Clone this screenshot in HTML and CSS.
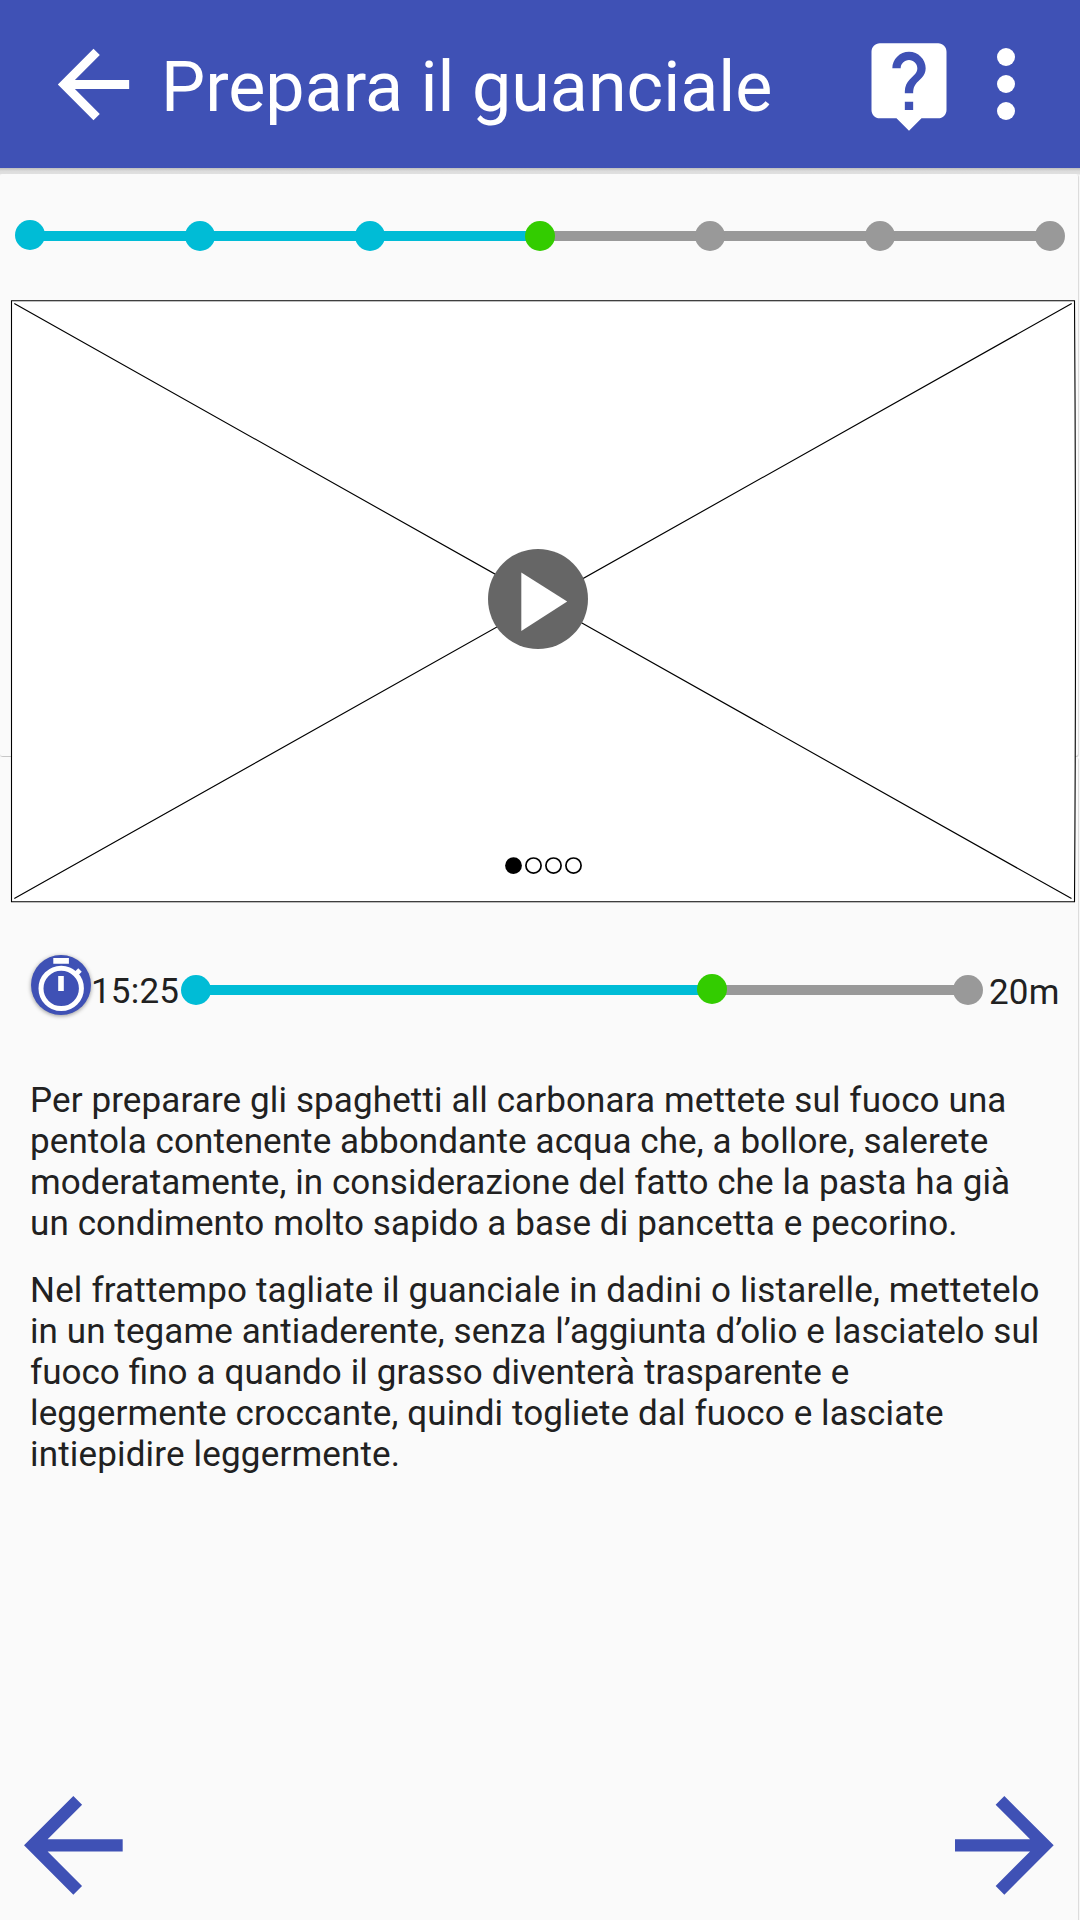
FILE: index.html
```html
<!DOCTYPE html>
<html lang="it">
<head>
<meta charset="utf-8">
<title>Prepara il guanciale</title>
<link rel="stylesheet" href="styles.css">
</head>
<body>
<div class="screen">
  <header class="app-bar">
    <svg class="back" viewBox="0 0 24 24"><path d="M20 11H7.83l5.59-5.59L12 4l-8 8 8 8 1.41-1.41L7.83 13H20v-2z"/></svg>
    <h1 class="title">Prepara il guanciale</h1>
    <svg class="help" viewBox="0 0 24 24"><path d="M19 2H5c-1.11 0-2 .9-2 2v14c0 1.1.89 2 2 2h4l3 3 3-3h4c1.1 0 2-.9 2-2V4c0-1.1-.9-2-2-2zm-6 16h-2v-2h2v2zm2.07-7.75l-.9.92C13.45 11.9 13 12.5 13 14h-2v-.5c0-1.1.45-2.1 1.17-2.83l1.24-1.26c.37-.36.59-.86.59-1.41 0-1.1-.9-2-2-2s-2 .9-2 2H8c0-2.21 1.79-4 4-4s4 1.79 4 4c0 .88-.36 1.68-.93 2.25z"/></svg>
    <svg class="more" viewBox="0 0 24 24"><circle cx="12" cy="6" r="2"/><circle cx="12" cy="12" r="2"/><circle cx="12" cy="18" r="2"/></svg>
  </header>
  <main class="content">
    <div class="sheet sheet-top"></div>
    <div class="sheet sheet-bottom"></div>
    <div class="steps">
      <span class="dot done first"></span><span class="bar done"></span>
      <span class="dot done"></span><span class="bar done"></span>
      <span class="dot done"></span><span class="bar done"></span>
      <span class="dot current"></span><span class="bar"></span>
      <span class="dot"></span><span class="bar"></span>
      <span class="dot"></span><span class="bar"></span>
      <span class="dot"></span>
    </div>
    <svg class="video" viewBox="10 298 1068 606">
      <path class="frame" d="M11.5 300.8Q540 299.2 1074.5 300.8Q1076.5 600 1074.5 901.8Q540 900.2 11.5 901.8Z"/>
      <path class="cross" d="M14.3 303.5Q540 597.6 1071.5 898.6M14.3 898.6L1071.7 303.5"/>
      <circle class="play" cx="538" cy="599" r="50"/>
      <path class="triangle" d="M521.3 572.5L567.2 601.4L521.3 631Z"/>
      <circle cx="513.5" cy="865.6" r="8.4"/>
      <g class="page"><circle cx="533.5" cy="865.6" r="7.6"/><circle cx="553.5" cy="865.6" r="7.6"/><circle cx="573.5" cy="865.6" r="7.6"/></g>
    </svg>
    <div class="timer">
      <div class="clock">
        <svg viewBox="0 0 60 60">
          <path class="solid" d="M22.3 3h15.6v5.8H22.3zM27.2 21h5.6v15h-5.6z"/>
          <circle class="line" cx="30.2" cy="33.4" r="20.2"/>
          <path class="line" d="M44 20L49 15"/>
        </svg>
      </div>
      <span class="time elapsed">15:25</span>
      <div class="track">
        <span class="dot done"></span><span class="bar done elapsed-bar"></span>
        <span class="dot current"></span><span class="bar"></span>
        <span class="dot"></span>
      </div>
      <span class="time total">20m</span>
    </div>
    <div class="text">
      <p><span class="medium">Per preparare gli spaghetti all carbonara mettete sul fuoco una</span><br>pentola contenente abbondante acqua che, a bollore, salerete<br>moderatamente, in considerazione del fatto che la pasta ha già<br><span class="medium">un condimento molto sapido a base di pancetta e pecorino.</span></p>
      <p><span class="wide">Nel frattempo tagliate il guanciale in dadini o listarelle, mettetelo</span><br>in un tegame antiaderente, senza l’aggiunta d’olio e lasciatelo sul<br><span class="narrow">fuoco fino a quando il grasso diventerà trasparente e</span><br><span class="medium">leggermente croccante, quindi togliete dal fuoco e lasciate</span><br><span class="wide">intiepidire leggermente.</span></p>
    </div>
    <nav class="pager">
      <svg viewBox="4 4 16 16"><path d="M20 11H7.83l5.59-5.59L12 4l-8 8 8 8 1.41-1.41L7.83 13H20v-2z"/></svg>
      <svg viewBox="4 4 16 16"><path d="M12 4l-1.41 1.41L16.17 11H4v2h12.17l-5.58 5.59L12 20l8-8z"/></svg>
    </nav>
  </main>
</div>
</body>
</html>
```
FILE: styles.css
```css
* { box-sizing: border-box; }
body { margin: 0; font-family: Roboto, "Liberation Sans", sans-serif; color: #212121; }
svg { display: block; flex: none; }
.screen { width: 1080px; height: 1920px; display: flex; flex-direction: column; overflow: hidden; background: #fafafa; }

.app-bar { height: 168px; flex: none; display: flex; align-items: center; background: #3f51b5; }
.app-bar svg { fill: #fff; }
.back { width: 107px; height: 107px; margin-left: 40px; }
.title { margin: 5px 0 0 14px; width: 698px; font-size: 70px; font-weight: 400; line-height: 84px; color: #fff; white-space: nowrap; }
.help { width: 100px; height: 100px; margin-top: 1px; }
.more { width: 108px; height: 108px; margin-left: -7px; }

.content { flex: 1; position: relative; z-index: 0; display: flex; flex-direction: column; padding-top: 6px; background: linear-gradient(#bdbdbd, #dcdcdc 3px, #e0e0e0 6px, #fafafa 7px); }
.sheet { position: absolute; z-index: -1; left: 0; right: 2px; border-radius: 2px; background: #fafafa; box-shadow: 0 1px 1px rgba(0, 0, 0, .12), 1px 1px 1px rgba(0, 0, 0, .12); }
.sheet-top { top: 6px; height: 582px; }
.sheet-bottom { top: 589px; bottom: -4px; }

.dot { flex: none; width: 30px; height: 30px; border-radius: 50%; background: #999; }
.bar { flex: 1; height: 10px; margin: 0 -2px; background: #999; }
.done { background: #00bcd6; }
.current { background: #3c0; }
.dot { z-index: 1; }
.steps { display: flex; align-items: center; height: 30px; margin: 47px 15px 0; }
.first { margin-top: -2px; }

.video { width: 1068px; height: 606px; margin: 47px 0 0 10px; }
.frame { fill: #fff; stroke: #000; stroke-width: 1.1; }
.cross { fill: none; stroke: #000; stroke-width: 1.15; }
.play { fill: #666; }
.triangle { fill: #fff; }
.page { fill: #fff; stroke: #000; stroke-width: 1.7; }

.timer { display: flex; align-items: center; height: 70px; margin: 51px 0 0 31px; }
.clock { width: 60px; height: 60px; margin-top: -10px; border-radius: 50%; background: #3f51b5; box-shadow: 0 1px 4px rgba(0, 0, 0, .4); }
.solid { fill: #fff; }
.line { fill: none; stroke: #fff; stroke-width: 5; }
.time { font-size: 35px; line-height: 42px; letter-spacing: .2px; white-space: nowrap; }
.elapsed { width: 90px; margin-top: 4px; }
.track { display: flex; align-items: center; width: 802px; }
.elapsed-bar { flex: 0 0 490px; }
.track .current { margin-top: -2px; }
.total { margin: 6px 0 0 6px; }

.text { margin: 55px 0 0 30px; font-size: 35px; line-height: 41px; letter-spacing: .09px; white-space: nowrap; }
.text p { margin: 0 0 26px; }
.wide { letter-spacing: .17px; }
.medium { letter-spacing: .12px; }
.narrow { letter-spacing: 0; word-spacing: .35px; }

.pager { display: flex; justify-content: space-between; margin: auto 26px 25.5px 24.3px; }
.pager svg { width: 98.7px; height: 98.7px; fill: #3f51b5; }
```
